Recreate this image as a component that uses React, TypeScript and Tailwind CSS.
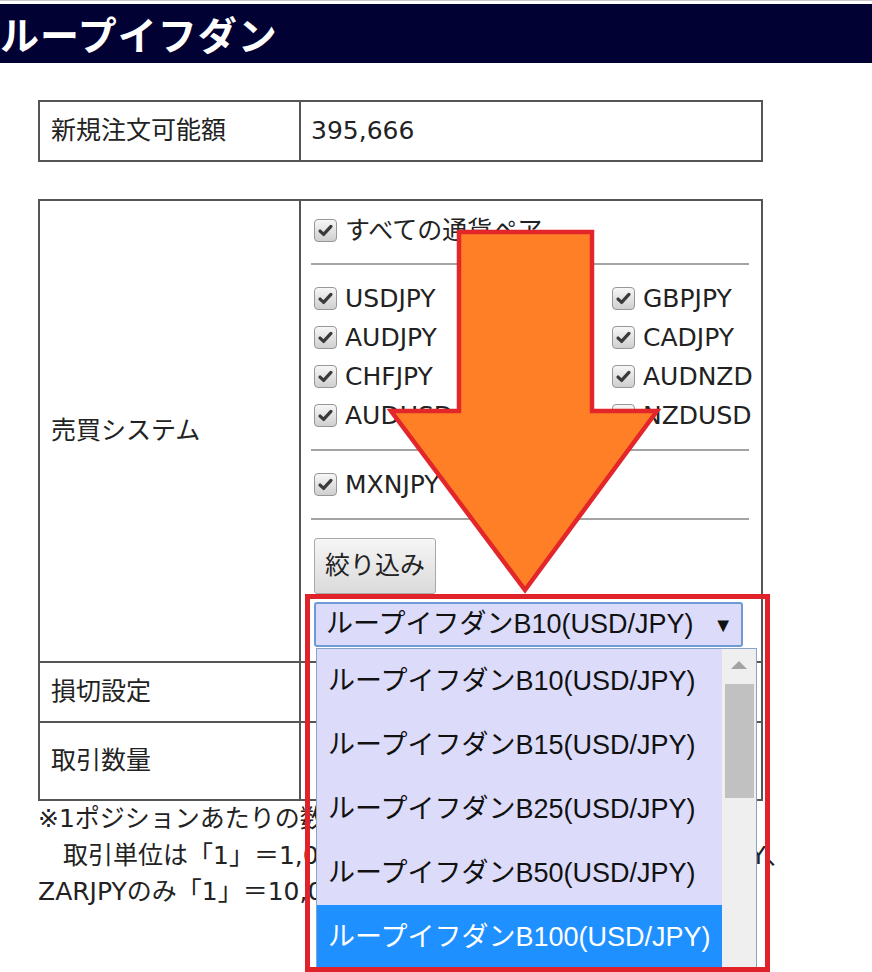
import React from 'react'

const pairsLeft = ['USDJPY', 'AUDJPY', 'CHFJPY', 'AUDUSD']
const pairsRight = ['GBPJPY', 'CADJPY', 'AUDNZD', 'NZDUSD']
const options = ['B10', 'B15', 'B25', 'B50', 'B100']

function Check() {
    return (
        <span className="w-[23px] h-[23px] shrink-0 rounded-[4px] border border-[#979797] bg-gradient-to-b from-[#f7f7f7] to-[#cfcfcf] flex items-center justify-center">
            <svg viewBox="0 0 16 16" className="w-[15px] h-[15px]">
                <path d="M2.2 8.6 L6 12.2 L13.8 3.6" stroke="#3a3a3a" strokeWidth="3.4" fill="none" strokeLinecap="round" strokeLinejoin="round"/>
            </svg>
        </span>
    )
}

function Pair({label}: {label: string}) {
    return (
        <div className="h-[39px] flex items-center gap-[8px] ml-[3px]">
            <Check/>
            <span>{label}</span>
        </div>
    )
}

const Hr = () => <div className="h-[2px] bg-[#a3a3a3] mr-[12px]"/>

export default function App() {
    return (
        <div className="relative w-[872px] h-[972px] bg-white overflow-hidden text-[25px] text-[#222] font-['DejaVu_Sans','Noto_Sans_CJK_JP',sans-serif]">
            <div className="border-t border-[#c8c8c8] pt-[3px]">
                <div className="h-[59px] bg-[#010133] flex items-center">
                    <h1 className="text-white font-bold text-[39px] tracking-[1px] font-['Noto_Sans_CJK_JP',sans-serif]">ループイフダン</h1>
                </div>
            </div>

            <div className="pl-[38px]">
                {/* 新規注文可能額 */}
                <div className="mt-[37px] w-[725px] h-[62px] border-2 border-[#555] grid grid-cols-[261px_1fr]">
                    <div className="border-r-2 border-[#555] pl-[11px] flex items-center">新規注文可能額</div>
                    <div className="pl-[10px] flex items-center">395,666</div>
                </div>

                {/* 売買システム */}
                <div className="mt-[37px] w-[725px] border-2 border-[#555]">
                    <div className="h-[462px] grid grid-cols-[261px_1fr] border-b-2 border-[#555]">
                        <div className="border-r-2 border-[#555] pl-[11px] flex items-center">売買システム</div>
                        <div className="pl-[10px] pt-[10px] flex flex-col">
                            <Pair label="すべての通貨ペア"/>
                            <div className="mt-[13px]"><Hr/></div>
                            <div className="mt-[14px] grid grid-cols-[298px_1fr]">
                                <div>{pairsLeft.map(p => <Pair key={p} label={p}/>)}</div>
                                <div>{pairsRight.map(p => <Pair key={p} label={p}/>)}</div>
                            </div>
                            <div className="mt-[14px]"><Hr/></div>
                            <div className="mt-[14px]"><Pair label="MXNJPY"/></div>
                            <div className="mt-[14px]"><Hr/></div>
                            <button className="mt-[18px] ml-[3px] w-[122px] h-[56px] border border-[#a9a9a9] rounded-[3px] bg-gradient-to-b from-[#f6f6f6] to-[#dadada] text-[25px] text-[#222] flex items-center justify-center">絞り込み</button>
                            <div className="mt-[8px] ml-[3px] w-[429px] h-[45px] rounded-[3px] border-2 border-[#6e9ad6] bg-[#dcdcfa] flex items-center justify-between pl-[10px] pr-[8px] text-[27px] text-[#111] font-['Liberation_Sans','Noto_Sans_CJK_JP',sans-serif]">
                                <span>ループイフダンB10(USD/JPY)</span>
                                <span className="text-[20px]">▼</span>
                            </div>
                        </div>
                    </div>
                    <div className="h-[60px] grid grid-cols-[261px_1fr] border-b-2 border-[#555]">
                        <div className="border-r-2 border-[#555] pl-[11px] flex items-center">損切設定</div>
                        <div/>
                    </div>
                    <div className="h-[76px] grid grid-cols-[261px_1fr]">
                        <div className="border-r-2 border-[#555] pl-[11px] flex items-center">取引数量</div>
                        <div/>
                    </div>
                </div>

                <div className="leading-[36.5px] whitespace-nowrap">
                    <p>※1ポジションあたりの数量です。</p>
                    <p>　取引単位は「1」＝1,000通貨単位です。 （USDJPY、MXNJPY、</p>
                    <p>ZARJPYのみ「1」＝10,000通貨単位）</p>
                </div>
            </div>

            {/* arrow */}
            <svg className="absolute left-0 top-0 w-[872px] h-[972px] pointer-events-none" viewBox="0 0 872 972">
                <polygon points="459,232 592,232 592,411 657,411 525,590 391,411 459,411" fill="#ff7f27" stroke="#e3262a" strokeWidth="4.5" strokeLinejoin="miter"/>
            </svg>

            {/* open list */}
            <div className="absolute left-[316px] top-[648px] w-[441px] h-[321px] border border-[#8aa4c8] bg-[#dcdcfa] flex font-['Liberation_Sans','Noto_Sans_CJK_JP',sans-serif] text-[27px] text-[#111]">
                <div className="flex-1 flex flex-col">
                    {options.map(o => (
                        <div key={o} className={`h-[64px] shrink-0 flex items-center pl-[11px] ${o === 'B100' ? 'bg-[#1e90ff] text-white' : ''}`}>
                            ループイフダン{o}(USD/JPY)
                        </div>
                    ))}
                </div>
                <div className="w-[34px] bg-[#efefef] flex flex-col items-center">
                    <div className="mt-[12px] w-0 h-0 border-l-[8px] border-r-[8px] border-b-[8px] border-l-transparent border-r-transparent border-b-[#a3a3a3]"/>
                    <div className="mt-[15px] w-[29px] h-[114px] bg-[#c1c1c1]"/>
                </div>
            </div>

            {/* red highlight */}
            <div className="absolute left-[305px] top-[594px] w-[465px] h-[378px] border-[5px] border-[#e0222a] pointer-events-none"/>
        </div>
    )
}
